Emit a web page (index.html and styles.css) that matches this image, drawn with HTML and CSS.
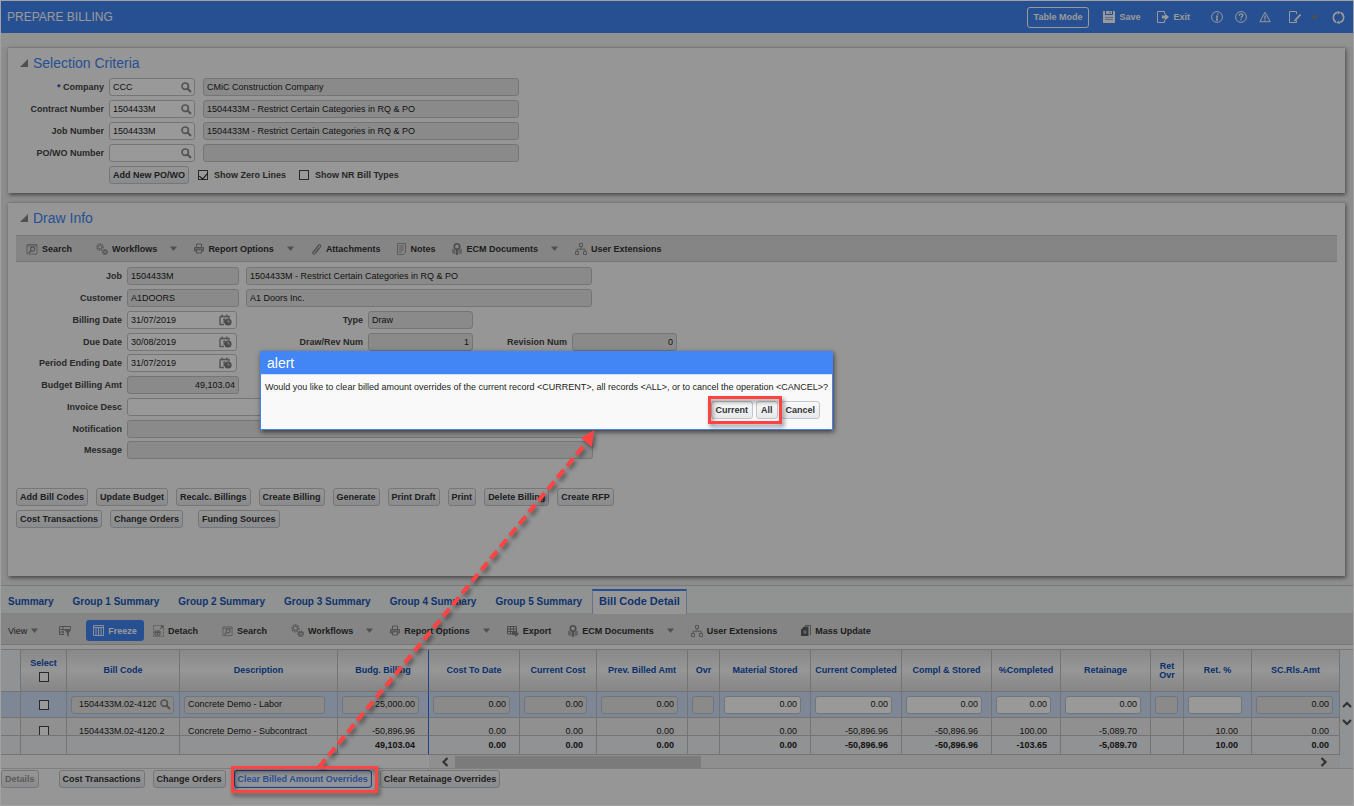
FILE: index.html
```html
<!DOCTYPE html>
<html lang="en">
	<head>
		<meta charset="UTF-8" />
		<meta name="viewport" content="width=device-width, initial-scale=1.0" />
		<title>Prepare Billing</title>
		<link rel="stylesheet" href="styles.css">
	</head>

	<body>
		<!-- icon sprite -->
		<svg class="sprite" width="0" height="0">
			<symbol id="i-lens" viewBox="0 0 11 11"><circle cx="4.2" cy="4.2" r="3.2" fill="none" stroke="#8c8c8c" stroke-width="1.7" /><path d="M6.7 6.7L10 10" stroke="#8c8c8c" stroke-width="2.2" /></symbol>
			<symbol id="i-cal" viewBox="0 0 13 12"><path d="M1 2.5h9v2M1 2.5v8h4M3.2.5v3M7.8.5v3M4.2 5.5l1-.6v4" fill="none" stroke="#8c8c8c" stroke-width="1.4" /><circle cx="9" cy="8" r="3.6" fill="#7d7d7d" /><path d="M9 5.8V8h2" stroke="#ddd" fill="none" /></symbol>
			<symbol id="i-search" viewBox="0 0 12 12"><path d="M1 1.5h10v9.5H1zM1 3h10" fill="none" stroke="#999" /><circle cx="6.6" cy="6" r="2.1" fill="none" stroke="#888" stroke-width="1.1" /><path d="M5 7.6L2.8 10" stroke="#888" stroke-width="1.4" /></symbol>
			<symbol id="i-gears" viewBox="0 0 12 12"><circle cx="4" cy="4" r="3.1" fill="none" stroke="#999" stroke-width="1.6" stroke-dasharray="1.5 .8" /><circle cx="4" cy="4" r="1.9" fill="none" stroke="#999" /><circle cx="9" cy="9" r="2.3" fill="none" stroke="#8c8c8c" stroke-width="1.6" stroke-dasharray="1.2 .6" /><circle cx="9" cy="9" r="1.4" fill="none" stroke="#8c8c8c" /></symbol>
			<symbol id="i-print" viewBox="0 0 10 11"><path d="M2.5 4V1h5v3M2.5 7.5v2.5h5V7.5" fill="none" stroke="#888" /><path d="M.5 8V4.5h9V8h-2V6.8h-5V8z" fill="#aaa" stroke="#888" /></symbol>
			<symbol id="i-clip" viewBox="0 0 11 12"><path d="M3 8.5L7.6 2.6M5 9.6l4.6-6c.8-1.3-1-2.6-2-1.4L2 9c-1 1.4 1 2.8 2 1.4l4-5.2" fill="none" stroke="#888" stroke-width="1.2" /></symbol>
			<symbol id="i-notes" viewBox="0 0 9 12"><path d="M.5.5h8v8.5l-2 2.5h-6z" fill="none" stroke="#999" /><path d="M2 3h5M2 5h5M2 7h5M2 9h3" stroke="#999" /></symbol>
			<symbol id="i-ecm" viewBox="0 0 10 12"><path d="M0 5.500l3.500 1.500v4.500L0 10zM10 5.500L6.500 7v4.500L10 10z" fill="#a3a3a3" /><circle cx="5" cy="3.500" r="2.700" fill="none" stroke="#7d7d7d" stroke-width="1.600" /><path d="M5 6v6" stroke="#707070" stroke-width="1.600" /></symbol>
			<symbol id="i-org" viewBox="0 0 12 12"><path d="M4.500.5h3v3h-3zM.5 8.500h3v3h-3zM8.500 8.500h3v3h-3zM6 4v2M2 8V6.200h8V8" fill="none" stroke="#8c8c8c" /></symbol>
			<symbol id="i-caret" viewBox="0 0 7 5"><path d="M0 .5h7L3.500 5z" fill="#858585" /></symbol>
		</svg>

		<div class="page">
			<header class="topbar">
				<h1 class="title">PREPARE BILLING</h1>
				<button class="mode">Table Mode</button>
				<button class="act save"><svg width="12" height="12" viewBox="0 0 12 12"><path d="M0 0h2v4h8V0h2v12H0z" fill="#fff" /><path d="M3 0h6v3H3z" fill="#fff" /><path d="M7 .5v2" stroke="#4285f4" /><path d="M2 6.5h8M2 8.5h8" stroke="#4285f4" stroke-width=".6" /></svg>Save</button>
				<button class="act exit"><svg width="12" height="12" viewBox="0 0 12 12"><path d="M7.5 3V.5h-7v11h7V9" fill="none" stroke="#fff" /><path d="M5 4.5h3v-2L12 6 8 9.500v-2H5z" fill="#fff" /></svg>Exit</button>
				<button class="act tool" aria-label="Info"><svg width="12" height="12" viewBox="0 0 12 12"><circle cx="6" cy="6" r="5.4" fill="none" stroke="#fff" /><path d="M6.800 2.400v1.400M5 5.200h1.300L5.600 9h1.400" fill="none" stroke="#fff" stroke-width="1.300" /></svg></button>
				<button class="act tool" aria-label="Help"><svg width="12" height="12" viewBox="0 0 12 12"><circle cx="6" cy="6" r="5.400" fill="none" stroke="#fff" /><path d="M4.200 4.700c0-2.400 3.700-2.200 3.600-.2C7.700 5.700 6 5.700 6 7.200M6 8.300v1.300" fill="none" stroke="#fff" stroke-width="1.300" /></svg></button>
				<button class="act tool" aria-label="Warnings"><svg width="12" height="12" viewBox="0 0 12 12"><path d="M6 1.300l5.200 9.400H.8z" fill="none" stroke="#fff" /><path d="M6 4.500v3.200M6 8.600v1.200" stroke="#fff" stroke-width="1.300" /></svg></button>
				<button class="act edit" aria-label="Edit"><svg width="12" height="12" viewBox="0 0 12 12"><path d="M7.500 3V.5h-7v11h7V9.500" fill="none" stroke="#fff" /><path d="M5.500 10l6-6.500" stroke="#fff" stroke-width="1.800" /></svg></button>
				<button class="act drop" aria-label="More"><svg width="7" height="5"><use href="#i-caret" /></svg></button>
				<button class="act" aria-label="Refresh"><svg width="13" height="13" viewBox="0 0 13 13"><path d="M4 11A5.200 5.200 0 0 1 5 1.500M9 2a5.200 5.200 0 0 1-1 9.500" fill="none" stroke="#fff" stroke-width="1.500" /><path d="M5 0l3.500 1L6 3.800zM8 13l-3.500-1L7 9.200z" fill="#fff" /><path d="M8.500 1.300A5.200 5.200 0 0 1 11.700 6M4.500 11.700A5.200 5.200 0 0 1 1.300 7" fill="none" stroke="#fff" stroke-width="1.200" /></svg></button>
			</header>

			<main class="content">
				<section class="panel criteria">
					<h2 class="heading"><span class="tri"></span>Selection Criteria</h2>
					<div class="row">
						<label class="lbl" for="company"><span class="req">*</span> Company</label>
						<div class="lov"><input class="inp" id="company" value="CCC" /><svg width="11" height="11"><use href="#i-lens" /></svg></div>
						<input class="inp ro w-name" aria-label="Company name" value="CMiC Construction Company" readonly />
					</div>
					<div class="row">
						<label class="lbl" for="contract">Contract Number</label>
						<div class="lov"><input class="inp" id="contract" value="1504433M" /><svg width="11" height="11"><use href="#i-lens" /></svg></div>
						<input class="inp ro w-name" aria-label="Contract name" value="1504433M - Restrict Certain Categories in RQ &amp; PO" readonly />
					</div>
					<div class="row">
						<label class="lbl" for="jobNumber">Job Number</label>
						<div class="lov"><input class="inp" id="jobNumber" value="1504433M" /><svg width="11" height="11"><use href="#i-lens" /></svg></div>
						<input class="inp ro w-name" aria-label="Job name" value="1504433M - Restrict Certain Categories in RQ &amp; PO" readonly />
					</div>
					<div class="row">
						<label class="lbl" for="powo">PO/WO Number</label>
						<div class="lov"><input class="inp" id="powo" value="" /><svg width="11" height="11"><use href="#i-lens" /></svg></div>
						<input class="inp ro w-name" aria-label="PO/WO name" value="" readonly />
					</div>
					<div class="row">
						<span class="lbl"></span>
						<button class="btn">Add New PO/WO</button>
						<label class="tick"><input type="checkbox" class="chk" checked />Show Zero Lines</label>
						<label class="tick"><input type="checkbox" class="chk" />Show NR Bill Types</label>
					</div>
				</section>

				<section class="panel draw">
					<h2 class="heading"><span class="tri"></span>Draw Info</h2>
					<div class="toolbar">
						<button class="tb wide"><svg width="12" height="12"><use href="#i-search" /></svg>Search</button>
						<button class="tb"><svg width="12" height="12"><use href="#i-gears" /></svg>Workflows<svg class="caret" width="7" height="5"><use href="#i-caret" /></svg></button>
						<button class="tb"><svg width="10" height="11"><use href="#i-print" /></svg>Report Options<svg class="caret" width="7" height="5"><use href="#i-caret" /></svg></button>
						<button class="tb"><svg width="11" height="12"><use href="#i-clip" /></svg>Attachments</button>
						<button class="tb"><svg width="9" height="12"><use href="#i-notes" /></svg>Notes</button>
						<button class="tb"><svg width="10" height="12"><use href="#i-ecm" /></svg>ECM Documents<svg class="caret" width="7" height="5"><use href="#i-caret" /></svg></button>
						<button class="tb"><svg width="12" height="12"><use href="#i-org" /></svg>User Extensions</button>
					</div>
					<div class="row">
						<label class="lbl" for="job">Job</label>
						<input class="inp ro w-code" id="job" value="1504433M" readonly />
						<input class="inp ro w-desc" aria-label="Job description" value="1504433M - Restrict Certain Categories in RQ &amp; PO" readonly />
					</div>
					<div class="row">
						<label class="lbl" for="customer">Customer</label>
						<input class="inp ro w-code" id="customer" value="A1DOORS" readonly />
						<input class="inp ro w-desc" aria-label="Customer name" value="A1 Doors Inc." readonly />
					</div>
					<div class="row">
						<label class="lbl" for="billDate">Billing Date</label>
						<div class="lov date"><input class="inp" id="billDate" value="31/07/2019" /><svg width="13" height="12"><use href="#i-cal" /></svg></div>
						<label class="lbl lbl-mid" for="type">Type</label>
						<input class="inp ro w-num" id="type" value="Draw" readonly />
					</div>
					<div class="row tight">
						<label class="lbl" for="dueDate">Due Date</label>
						<div class="lov date"><input class="inp" id="dueDate" value="30/08/2019" /><svg width="13" height="12"><use href="#i-cal" /></svg></div>
						<label class="lbl lbl-mid" for="revNum">Draw/Rev Num</label>
						<input class="inp ro w-num num" id="revNum" value="1" readonly />
						<label class="lbl lbl-rev" for="revision">Revision Num</label>
						<input class="inp ro w-num num" id="revision" value="0" readonly />
					</div>
					<div class="row">
						<label class="lbl" for="endDate">Period Ending Date</label>
						<div class="lov date"><input class="inp" id="endDate" value="31/07/2019" /><svg width="13" height="12"><use href="#i-cal" /></svg></div>
					</div>
					<div class="row">
						<label class="lbl" for="budget">Budget Billing Amt</label>
						<input class="inp ro w-code num" id="budget" value="49,103.04" readonly />
					</div>
					<div class="row">
						<label class="lbl" for="invoice">Invoice Desc</label>
						<input class="inp w-long" id="invoice" value="" />
					</div>
					<div class="row tight">
						<label class="lbl" for="notification">Notification</label>
						<input class="inp ro w-long" id="notification" value="" readonly />
					</div>
					<div class="row">
						<label class="lbl" for="message">Message</label>
						<input class="inp ro w-long" id="message" value="" readonly />
					</div>
					<div class="btns">
						<button class="btn">Add Bill Codes</button>
						<button class="btn">Update Budget</button>
						<button class="btn">Recalc. Billings</button>
						<button class="btn">Create Billing</button>
						<button class="btn">Generate</button>
						<button class="btn">Print Draft</button>
						<button class="btn">Print</button>
						<button class="btn">Delete Billing</button>
						<button class="btn">Create RFP</button>
					</div>
					<div class="btns">
						<button class="btn">Cost Transactions</button>
						<button class="btn">Change Orders</button>
						<button class="btn apart">Funding Sources</button>
					</div>
				</section>
			</main>

			<section class="detail">
				<nav class="tabs">
					<a class="tab" href="#">Summary</a>
					<a class="tab" href="#">Group 1 Summary</a>
					<a class="tab" href="#">Group 2 Summary</a>
					<a class="tab" href="#">Group 3 Summary</a>
					<a class="tab" href="#">Group 4 Summary</a>
					<a class="tab" href="#">Group 5 Summary</a>
					<a class="tab on" href="#">Bill Code Detail</a>
				</nav>
				<div class="toolbar grid-bar">
					<button class="tb view">View<svg width="7" height="5"><use href="#i-caret" /></svg></button>
					<button class="tb" aria-label="Query by example"><svg width="12" height="12" viewBox="0 0 12 12"><path d="M.5 1.500h11v3H.5zM.5 4.500v5H5M.5 7H5M4 1.500v8" fill="none" stroke="#888" /><path d="M5.500 5H12L9.700 8v4L8 10.500V8z" fill="#888" /></svg></button>
					<button class="tb freeze"><svg width="11" height="11" viewBox="0 0 11 11"><path d="M.5.5h10v10H.5zM.5 2.500h10M3 2v8M5.500 2v8M8 2v8" fill="none" stroke="#e8eefc" /></svg>Freeze</button>
					<button class="tb wide"><svg width="11" height="12" viewBox="0 0 11 12"><path d="M.5 11.500V.5h10v11z" fill="none" stroke="#999" stroke-dasharray="2 1" /><path d="M2 6h5v4H2zM7 4l3-3M7.500 1H10v2.500" fill="none" stroke="#808080" /><path d="M2 7.500h5M4.500 6v4" stroke="#888" /></svg>Detach</button>
					<button class="tb wide"><svg width="11" height="12"><use href="#i-search" /></svg>Search</button>
					<button class="tb"><svg width="13" height="13"><use href="#i-gears" /></svg>Workflows<svg class="caret" width="7" height="5"><use href="#i-caret" /></svg></button>
					<button class="tb"><svg width="10" height="11"><use href="#i-print" /></svg>Report Options<svg class="caret" width="7" height="5"><use href="#i-caret" /></svg></button>
					<button class="tb"><svg width="12" height="12" viewBox="0 0 12 12"><path d="M.5 1.500h9v7.500h-9zM.5 4h9M.5 6.500h9M3.500 1.500V9M6.500 1.500V9" fill="none" stroke="#7d7d7d" /><path d="M5 7h3V5.500L12 9l-4 3v-2H5z" fill="#808080" /></svg>Export</button>
					<button class="tb"><svg width="10" height="12"><use href="#i-ecm" /></svg>ECM Documents<svg class="caret" width="7" height="5"><use href="#i-caret" /></svg></button>
					<button class="tb wide"><svg width="12" height="12"><use href="#i-org" /></svg>User Extensions</button>
					<button class="tb"><svg width="10" height="12" viewBox="0 0 10 12"><path d="M3 1.500h4.500V11H0V4.500z" fill="#606060" /><path d="M4 .5h5.500V10" fill="none" stroke="#888" /><path d="M4 5v4M2 7h4" stroke="#bbb" /></svg>Mass Update</button>
				</div>

				<div class="grid-wrap">
					<div class="grid-main">
						<table class="grid">
							<colgroup>
								<col class="c20"><col class="c46"><col class="c113"><col class="c158"><col class="c91"><col class="c91"><col class="c77"><col class="c91"><col class="c32"><col class="c91"><col class="c91"><col class="c90"><col class="c69"><col class="c90"><col class="c33"><col class="c68"><col class="c88">
							</colgroup>
							<thead>
								<tr>
									<th class="gutter"></th>
									<th><label class="pick">Select<input type="checkbox" class="chk" /></label></th>
									<th>Bill Code</th>
									<th>Description</th>
									<th class="frozen">Budg. Billing</th>
									<th>Cost To Date</th>
									<th>Current Cost</th>
									<th>Prev. Billed Amt</th>
									<th>Ovr</th>
									<th>Material Stored</th>
									<th>Current Completed</th>
									<th>Compl &amp; Stored</th>
									<th>%Completed</th>
									<th>Retainage</th>
									<th>Ret<br>Ovr</th>
									<th>Ret. %</th>
									<th>SC.Rls.Amt</th>
								</tr>
							</thead>
							<tbody>
								<tr class="current">
									<td class="gutter"></td>
									<td class="mid"><input type="checkbox" class="chk" aria-label="Select row" /></td>
									<td class="slim"><div class="lov code"><input class="inp ro" aria-label="Bill Code" value="1504433M.02-4120" /><svg width="11" height="11"><use href="#i-lens" /></svg></div></td>
									<td class="desc"><input class="inp ro" aria-label="Description" value="Concrete Demo - Labor" readonly /></td>
									<td class="frozen"><input class="inp ro num" aria-label="Budg. Billing" value="25,000.00" readonly /></td>
									<td><input class="inp ro num" aria-label="Cost To Date" value="0.00" readonly /></td>
									<td><input class="inp ro num" aria-label="Current Cost" value="0.00" readonly /></td>
									<td><input class="inp ro num" aria-label="Prev. Billed Amt" value="0.00" readonly /></td>
									<td class="slim"><input class="inp ro" aria-label="Ovr" readonly /></td>
									<td><input class="inp num" aria-label="Material Stored" value="0.00" /></td>
									<td><input class="inp num" aria-label="Current Completed" value="0.00" /></td>
									<td><input class="inp num" aria-label="Compl &amp; Stored" value="0.00" /></td>
									<td><input class="inp num" aria-label="%Completed" value="0.00" /></td>
									<td><input class="inp num" aria-label="Retainage" value="0.00" /></td>
									<td class="slim"><input class="inp ro" aria-label="Ret Ovr" readonly /></td>
									<td><input class="inp num" aria-label="Ret. %" value="" /></td>
									<td><input class="inp ro num" aria-label="SC.Rls.Amt" value="0.00" readonly /></td>
								</tr>
								<tr class="cut">
									<td class="gutter"></td>
									<td class="mid"><div><input type="checkbox" class="chk" aria-label="Select row" /></div></td>
									<td class="txt code-txt"><div>1504433M.02-4120.2</div></td>
									<td class="txt"><div>Concrete Demo - Subcontract</div></td>
									<td class="frozen val"><div>-50,896.96</div></td>
									<td class="val"><div>0.00</div></td>
									<td class="val"><div>0.00</div></td>
									<td class="val"><div>0.00</div></td>
									<td></td>
									<td class="val"><div>0.00</div></td>
									<td class="val"><div>-50,896.96</div></td>
									<td class="val"><div>-50,896.96</div></td>
									<td class="val"><div>100.00</div></td>
									<td class="val"><div>-5,089.70</div></td>
									<td></td>
									<td class="val"><div>10.00</div></td>
									<td class="val"><div>0.00</div></td>
								</tr>
							</tbody>
							<tfoot>
								<tr>
									<td class="gutter"></td>
									<td></td>
									<td></td>
									<td></td>
									<td class="frozen val">49,103.04</td>
									<td class="val">0.00</td>
									<td class="val">0.00</td>
									<td class="val">0.00</td>
									<td></td>
									<td class="val">0.00</td>
									<td class="val">-50,896.96</td>
									<td class="val">-50,896.96</td>
									<td class="val">-103.65</td>
									<td class="val">-5,089.70</td>
									<td></td>
									<td class="val">10.00</td>
									<td class="val">0.00</td>
								</tr>
							</tfoot>
						</table>
						<div class="hscroll">
							<svg width="8" height="10" viewBox="0 0 8 10"><path d="M6.500 1L2.500 5l4 4" fill="none" stroke="#555" stroke-width="2.200" /></svg>
							<div class="thumb"></div>
							<svg width="8" height="10" viewBox="0 0 8 10"><path d="M1.500 1l4 4-4 4" fill="none" stroke="#555" stroke-width="2.200" /></svg>
						</div>
					</div>
					<div class="vscroll">
						<svg width="10" height="8" viewBox="0 0 10 8"><path d="M1 6l4-4 4 4" fill="none" stroke="#555" stroke-width="2.200" /></svg>
						<svg width="10" height="8" viewBox="0 0 10 8"><path d="M1 2l4 4 4-4" fill="none" stroke="#555" stroke-width="2.200" /></svg>
					</div>
				</div>

				<div class="foot">
					<button class="btn details" disabled>Details</button>
					<button class="btn">Cost Transactions</button>
					<button class="btn">Change Orders</button>
					<button class="btn focus">Clear Billed Amount Overrides</button>
					<button class="btn">Clear Retainage Overrides</button>
				</div>
			</section>

			<div class="backdrop"></div>

			<div class="dialog" role="dialog" aria-labelledby="dlgTitle">
				<div class="dialog-head" id="dlgTitle">alert</div>
				<p class="dialog-msg">Would you like to clear billed amount overrides of the current record &lt;CURRENT&gt;, all records &lt;ALL&gt;, or to cancel the operation &lt;CANCEL&gt;?</p>
				<div class="dialog-btns">
					<button class="btn">Current</button>
					<button class="btn">All</button>
					<button class="btn">Cancel</button>
				</div>
			</div>

			<!-- callouts drawn over the page -->
			<svg class="marks" width="900" height="806" viewBox="0 0 900 806">
				<rect x="709.500" y="397.500" width="71" height="25" />
				<rect x="232.500" y="767.500" width="144" height="24" />
				<path d="M319 767L586 443" stroke-dasharray="10 5" stroke-width="4" />
				<path class="tip" d="M594 430l-2 17-11-9z" />
			</svg>
		</div>
	</body>
</html>
```

FILE: styles.css
```css
* {
	box-sizing: border-box;
	margin: 0;
	padding: 0;
}

body {
	font-family: "Liberation Sans", Arial, sans-serif;
	font-size: 9px;
	color: #222;
	background: #fafafa;
}

button,
input {
	font-family: inherit;
	font-size: 9px;
	color: inherit;
}

button {
	border: none;
	background: none;
	font-weight: bold;
	white-space: nowrap;
}

svg {
	flex: none;
}

.sprite {
	position: absolute;
}

.page {
	position: relative;
	min-height: 100vh;
	padding: 1px;
	display: flex;
	flex-direction: column;
}

/* top bar */
.topbar {
	height: 32px;
	padding: 0 8px 0 6px;
	display: flex;
	align-items: center;
	background: #4285f4;
	color: #fff;
}

.title {
	flex: 1;
	font-size: 12px;
	font-weight: normal;
}

.mode {
	height: 21px;
	padding: 0 6px;
	margin-right: 14px;
	border: 1px solid #fff;
	border-radius: 3px;
}

.act {
	display: flex;
	align-items: center;
	gap: 4px;
}

.save {
	margin-right: 17px;
}

.exit {
	margin-right: 21px;
}

.tool {
	margin-right: 12px;
}

.edit {
	margin-left: 6px;
	margin-right: 10px;
}

.drop {
	margin-right: 14px;
}

/* panels */
.content {
	padding: 14px 8px 9px 7px;
	display: flex;
	flex-direction: column;
	gap: 9px;
	background: linear-gradient(#f1f5f3 14px, #ececec 14px);
}

.panel {
	background: #fafafa;
	border-top: 1px solid #cdcdcd;
	box-shadow: 1px 2px 4px #777;
}

.criteria {
	padding-bottom: 5px;
}

.draw {
	padding-bottom: 44px;
}

.heading {
	display: flex;
	align-items: center;
	gap: 5px;
	padding-left: 12px;
	font-size: 14px;
	line-height: 30px;
	font-weight: normal;
	color: #4285f4;
}

.tri {
	border-left: 8px solid transparent;
	border-bottom: 8px solid #858585;
}

.row {
	display: flex;
	align-items: center;
	height: 18px;
	margin-bottom: 4px;
}

.tight {
	margin-bottom: 3px;
}

.lbl {
	width: 96px;
	margin-right: 5px;
	text-align: right;
	font-weight: bold;
	color: #444;
	white-space: nowrap;
}

.draw .lbl {
	width: 114px;
}

.draw .lbl-mid {
	width: 126px;
}

.draw .lbl-rev {
	width: 94px;
}

.req {
	color: #0b50c0;
}

.inp {
	height: 18px;
	width: 100%;
	padding: 0 3px 1px;
	border: 1px solid #c4c4c4;
	border-radius: 3px;
	background: #fff;
	outline: 0;
}

.ro {
	background: #e7e7e7;
}

.num {
	text-align: right;
}

.lov {
	width: 86px;
	margin-right: 8px;
	display: flex;
	align-items: center;
}

.lov .inp {
	padding-right: 17px;
}

.lov svg {
	margin-left: -14px;
}

.date {
	width: 110px;
	margin-right: 0;
}

.date svg {
	margin-left: -18px;
	margin-right: 5px;
}

.w-name {
	width: 316px;
}

.w-code {
	width: 112px;
	margin-right: 7px;
}

.w-desc {
	width: 346px;
}

.w-num {
	width: 105px;
}

.w-long {
	width: 466px;
}

.btn {
	height: 18px;
	padding: 0 3px 1px;
	border: 1px solid #c2c5c9;
	border-radius: 3px;
	background: linear-gradient(#fafafa, #e6e8ec);
	color: #333;
}

.tick {
	display: flex;
	align-items: center;
	gap: 6px;
	margin-left: 9px;
	font-weight: bold;
	color: #444;
}

.tick + .tick {
	margin-left: 13px;
}

.chk {
	appearance: none;
	flex: none;
	width: 10px;
	height: 10px;
	border: 1px solid #444;
	background: #fff;
}

.chk:checked::after {
	content: "";
	display: block;
	width: 4px;
	height: 7px;
	margin-left: 2px;
	border: solid #111;
	border-width: 0 1px 1px 0;
	transform: rotate(40deg);
}

/* toolbars */
.toolbar {
	height: 27px;
	margin: 2px 8px 5px;
	padding-left: 10px;
	display: flex;
	align-items: center;
	gap: 17px;
	background: #dedede;
	border-top: 1px solid #c4c4c4;
	border-bottom: 1px solid #c4c4c4;
}

.tb {
	display: flex;
	align-items: center;
	gap: 4px;
	color: #333;
}

.wide {
	margin-right: 7px;
}

.caret {
	margin-left: 9px;
}

.btns {
	display: flex;
	gap: 8px;
	padding-left: 8px;
	margin-bottom: 4px;
}

.row + .btns {
	margin-top: 29px;
}

.apart {
	margin-left: 7px;
}

/* detail grid */
.detail {
	border-top: 1px solid #c8c8c8;
}

.tabs {
	height: 28px;
	padding-top: 3px;
	display: flex;
	gap: 1px;
	background: #f1f5f3;
	border-bottom: 1px solid #d6dde4;
}

.tab {
	padding: 0 9px;
	line-height: 25px;
	font-size: 10px;
	font-weight: bold;
	color: #1a56b8;
	text-decoration: none;
	white-space: nowrap;
}

.tab:first-child {
	padding-left: 7px;
}

.on {
	height: 25px;
	padding: 0 6px;
	line-height: 21px;
	font-size: 11px;
	border: 1px solid #a9c0e8;
	border-top: 2px solid #4285f4;
	border-bottom: none;
	background: #fafafa;
}

.grid-bar {
	height: 31px;
	margin: 0 0 4px;
	padding: 3px 0 0 7px;
	border-top: none;
}

.view {
	font-weight: normal;
	margin-right: 4px;
}

.freeze {
	height: 21px;
	margin-left: -2px;
	margin-right: -8px;
	padding: 0 7px;
	border-radius: 3px;
	background: #4285f4;
	color: #fff;
}

.grid-wrap {
	display: flex;
	border-top: 1px solid #c4c4c4;
	border-bottom: 1px solid #d4d4d4;
}

.grid-main {
	flex: 1;
	min-width: 0;
	overflow: hidden;
}

.grid {
	width: 1339px;
	table-layout: fixed;
	border-collapse: separate;
	border-spacing: 0;
}

.c20 { width: 20px; }
.c32 { width: 32px; }
.c33 { width: 33px; }
.c46 { width: 46px; }
.c68 { width: 68px; }
.c69 { width: 69px; }
.c77 { width: 77px; }
.c88 { width: 88px; }
.c90 { width: 90px; }
.c91 { width: 91px; }
.c113 { width: 113px; }
.c158 { width: 158px; }

.grid th,
.grid td {
	border-right: 1px solid #c2c2c2;
	border-bottom: 1px solid #c2c2c2;
}

.grid th {
	height: 42px;
	line-height: 9px;
	color: #0b50b8;
	background: linear-gradient(#e4e4e4, #fbfbfb 50%, #dfdfdf);
	white-space: nowrap;
}

.grid td {
	padding: 0 9px 0 4px;
	background: #f0f0f0;
}

.grid .frozen {
	border-right-color: #2f6fd8;
}

.grid .gutter {
	background: #f1f3f6;
}

.grid td:last-child {
	padding-right: 6px;
}

.grid .slim {
	padding-right: 5px;
}

.grid .desc {
	padding-right: 12px;
}

.grid .mid {
	padding: 0;
	text-align: center;
}

.mid .chk {
	display: block;
	margin: 0 auto;
}

.pick {
	display: flex;
	flex-direction: column;
	align-items: center;
	gap: 4px;
}

.grid .current td {
	height: 26px;
	background: #d3e1fa;
}

.code {
	width: 103px;
	margin: 0;
}

.code .inp {
	padding-left: 7px;
}

.cut td {
	height: 18px;
	vertical-align: top;
}

.cut div {
	height: 17px;
	padding-top: 8px;
	overflow: hidden;
	white-space: nowrap;
}

.grid .txt {
	padding-left: 8px;
}

.grid .code-txt {
	padding-left: 12px;
	padding-right: 12px;
}

.grid .val {
	padding: 0 13px 0 0;
	text-align: right;
}

.grid .val:last-child {
	padding-right: 10px;
}

.grid tfoot td {
	height: 19px;
	font-weight: bold;
	background: #f0f3f5;
}

.hscroll {
	display: flex;
	align-items: center;
	height: 13px;
	margin-left: 428px;
	padding: 0 12px;
	background: #eee;
}

.thumb {
	width: 246px;
	height: 12px;
	margin: 0 auto 0 6px;
	background: #cdcdcd;
}

.vscroll {
	flex: none;
	width: 13px;
	padding-top: 51px;
	display: flex;
	flex-direction: column;
	align-items: center;
	gap: 9px;
	background: #f1f3f6;
}

.foot {
	display: flex;
	gap: 8px;
	padding: 1px 0 17px;
}

.details {
	margin-right: 12px;
	color: #999;
}

.focus {
	border: 1px solid #2f6fd8;
	box-shadow: inset 0 0 1px #2f6fd8;
	color: #4285f4;
	background: #f4f6fa;
}

/* modal */
.backdrop {
	position: absolute;
	inset: 0;
	border: 1px solid #a2a2a2;
	background: rgba(0, 0, 0, 0.4);
}

.dialog {
	position: absolute;
	left: 260px;
	top: 351px;
	border: 1px solid #4285f4;
	background: #f9f9f9;
	box-shadow: 1px 2px 5px rgba(0, 0, 0, 0.6);
}

.dialog-head {
	padding-left: 6px;
	font-size: 14px;
	line-height: 22px;
	color: #fff;
	background: #4285f4;
	border-bottom: 1px solid #d5e0f5;
}

.dialog-msg {
	padding: 6px 4px 8px;
	line-height: 12px;
	white-space: nowrap;
}

.dialog-btns {
	display: flex;
	justify-content: flex-end;
	gap: 3px;
	padding: 0 12px 10px;
}

.dialog-btns .btn {
	padding: 0 4px 1px;
}

.marks {
	position: absolute;
	left: 0;
	top: 0;
	fill: none;
	stroke: #ff4343;
	stroke-width: 3;
	filter: drop-shadow(2px 3px 2px rgba(0, 0, 0, 0.45));
	pointer-events: none;
}

.tip {
	fill: #ff4343;
	stroke: none;
}
```
